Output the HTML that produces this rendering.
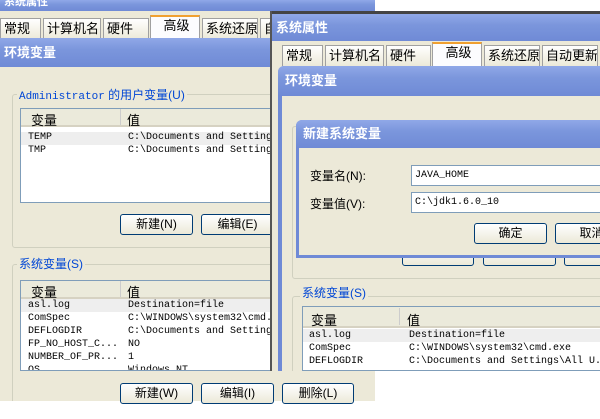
<!DOCTYPE html>
<html><head><meta charset="utf-8"><style>
*{margin:0;padding:0;box-sizing:border-box}
body{width:600px;height:419px;background:#fff;position:relative;overflow:hidden;font-family:"Liberation Sans","Noto Sans CJK SC",sans-serif;font-size:12px;color:#000}
.a{position:absolute}
.bg{background:#ece9d8}
.tb{background:linear-gradient(#90a8e8,#7b96dc 40%,#6f8ad6);color:#fff;font-weight:bold;font-size:13px;padding-left:4px}
.tab{position:absolute;height:21px;border:1px solid #a0a0a0;border-bottom:none;background:linear-gradient(#fff,#ece9d8);font-size:13px;padding-left:3px;line-height:20px;white-space:nowrap;overflow:hidden}
.tab.sel{background:#fcfcfe;border-top:2px solid #f0a030;height:24px;line-height:18px;text-align:center}
.grp{position:absolute;border:1px solid #d0d0bf;border-radius:3px}
.gl{position:absolute;background:#ece9d8;color:#0046d5;font-size:12px;padding:0 2px;white-space:nowrap}
.list{position:absolute;background:#fff;border:1px solid #7f9db9;overflow:hidden}
.hdr{position:absolute;left:0;right:0;top:0;height:18px;background:#ebeadb;border-bottom:2px solid #d6d2c2;font-size:13px}
.mono{font-family:"Liberation Mono","Noto Sans CJK SC",monospace;font-size:10px;white-space:pre;line-height:13px}
.btn{position:absolute;height:21px;border:1px solid #003c74;border-radius:3px;background:linear-gradient(#fff,#ece9d8);text-align:center;font-size:12px;line-height:19px;white-space:nowrap;overflow:hidden}
.inp{position:absolute;background:#fff;border:1px solid #7f9db9;padding-left:3px;line-height:19px}
</style></head><body>
<div class="a tb" style="left:0;top:0;width:375px;height:11px;font-size:11px;line-height:4px">系统属性</div>
<div class="a bg" style="left:0;top:11px;width:272px;height:390px"></div>
<div class="tab" style="left:0;top:18px;width:41px">常规</div>
<div class="tab" style="left:43px;top:18px;width:58px">计算机名</div>
<div class="tab" style="left:103px;top:18px;width:46px">硬件</div>
<div class="tab sel" style="left:150px;top:15px;width:50px">高级</div>
<div class="tab" style="left:202px;top:18px;width:56px">系统还原</div>
<div class="tab" style="left:260px;top:18px;width:14px">自</div>
<div class="a tb" style="left:0;top:38px;width:272px;height:29px;line-height:29px">环境变量</div>
<div class="grp" style="left:12px;top:94px;width:270px;height:154px"></div>
<div class="gl" style="left:17px;top:86px"><span class="mono" style="color:#0046d5;font-size:11px">Administrator</span> 的用户变量(U)</div>
<div class="list" style="left:20px;top:108px;width:260px;height:95px">
 <div class="hdr"><span class="a" style="left:10px;top:1px">变量</span><span class="a" style="left:99px;top:0;width:1px;height:16px;background:#ccc"></span><span class="a" style="left:106px;top:1px">值</span></div>
 <div class="a" style="left:0;top:23px;width:260px;height:13px;background:#eeeeee"></div>
 <div class="a mono" style="left:7px;top:22px">TEMP
TMP</div>
 <div class="a mono" style="left:107px;top:22px">C:\Documents and Setting
C:\Documents and Setting</div>
</div>
<div class="btn" style="left:120px;top:214px;width:73px">新建(N)</div>
<div class="btn" style="left:201px;top:214px;width:73px">编辑(E)</div>
<div class="grp" style="left:12px;top:264px;width:270px;height:150px"></div>
<div class="gl" style="left:17px;top:255px">系统变量(S)</div>
<div class="list" style="left:20px;top:280px;width:260px;height:91px">
 <div class="hdr"><span class="a" style="left:10px;top:1px">变量</span><span class="a" style="left:99px;top:0;width:1px;height:16px;background:#ccc"></span><span class="a" style="left:106px;top:1px">值</span></div>
 <div class="a" style="left:0;top:18px;width:260px;height:13px;background:#eeeeee"></div>
 <div class="a mono" style="left:7px;top:18px">asl.log
ComSpec
DEFLOGDIR
FP_NO_HOST_C...
NUMBER_OF_PR...
OS</div>
 <div class="a mono" style="left:107px;top:18px">Destination=file
C:\WINDOWS\system32\cmd.
C:\Documents and Setting
NO
1
Windows_NT</div>
</div>
<div class="a" style="left:271px;top:11px;width:329px;height:3px;background:#444"></div>
<div class="a" style="left:270px;top:11px;width:2px;height:360px;background:#555"></div>
<div class="a bg" style="left:272px;top:14px;width:328px;height:357px"></div>
<div class="a tb" style="left:272px;top:14px;width:328px;height:27px;line-height:27px">系统属性</div>
<div class="tab" style="left:282px;top:45px;width:41px">常规</div>
<div class="tab" style="left:325px;top:45px;width:59px">计算机名</div>
<div class="tab" style="left:386px;top:45px;width:45px">硬件</div>
<div class="tab sel" style="left:432px;top:42px;width:50px">高级</div>
<div class="tab" style="left:484px;top:45px;width:56px">系统还原</div>
<div class="tab" style="left:542px;top:45px;width:56px">自动更新</div>
<div class="a" style="left:278px;top:66px;width:322px;height:305px;background:#6f8ad6;border-radius:6px 0 0 0"></div>
<div class="a bg" style="left:282px;top:96px;width:318px;height:275px"></div>
<div class="a tb" style="left:278px;top:66px;width:322px;height:30px;line-height:30px;border-radius:6px 0 0 0;padding-left:7px">环境变量</div>
<div class="grp" style="left:292px;top:126px;width:320px;height:153px"></div>
<div class="btn" style="left:402px;top:245px;width:72px"></div>
<div class="btn" style="left:483px;top:245px;width:73px"></div>
<div class="btn" style="left:564px;top:245px;width:73px"></div>
<div class="grp" style="left:292px;top:296px;width:320px;height:80px"></div>
<div class="gl" style="left:300px;top:284px">系统变量(S)</div>
<div class="list" style="left:302px;top:306px;width:300px;height:65px">
 <div class="hdr" style="height:21px"><span class="a" style="left:8px;top:3px">变量</span><span class="a" style="left:96px;top:1px;width:1px;height:17px;background:#ccc"></span><span class="a" style="left:104px;top:3px">值</span></div>
 <div class="a" style="left:0;top:22px;width:300px;height:13px;background:#eeeeee"></div>
 <div class="a mono" style="left:6px;top:22px">asl.log
ComSpec
DEFLOGDIR</div>
 <div class="a mono" style="left:106px;top:22px">Destination=file
C:\WINDOWS\system32\cmd.exe
C:\Documents and Settings\All U.</div>
</div>
<div class="a" style="left:296px;top:120px;width:304px;height:138px;background:#6f8ad6;border-radius:6px 0 0 0"></div>
<div class="a bg" style="left:299px;top:148px;width:301px;height:107px"></div>
<div class="a tb" style="left:296px;top:120px;width:304px;height:28px;line-height:28px;padding-left:7px;border-radius:6px 0 0 0">新建系统变量</div>
<div class="a" style="left:310px;top:167px;font-size:12px">变量名(N):</div>
<div class="a" style="left:310px;top:195px;font-size:12px">变量值(V):</div>
<div class="inp mono" style="left:411px;top:165px;width:192px;height:21px;line-height:19px">JAVA_HOME</div>
<div class="inp mono" style="left:411px;top:192px;width:192px;height:21px;line-height:19px">C:\jdk1.6.0_10</div>
<div class="btn" style="left:474px;top:223px;width:73px">确定</div>
<div class="btn" style="left:555px;top:223px;width:73px">取消</div>
<div class="a" style="left:0;top:371px;width:600px;height:48px;background:#fff"></div>
<div class="a bg" style="left:0;top:371px;width:375px;height:30px"></div>
<div class="a" style="left:12px;top:371px;width:1px;height:30px;background:#d0d0bf"></div>
<div class="btn" style="left:120px;top:383px;width:73px">新建(W)</div>
<div class="btn" style="left:201px;top:383px;width:73px">编辑(I)</div>
<div class="btn" style="left:282px;top:383px;width:72px">删除(L)</div>
</body></html>
